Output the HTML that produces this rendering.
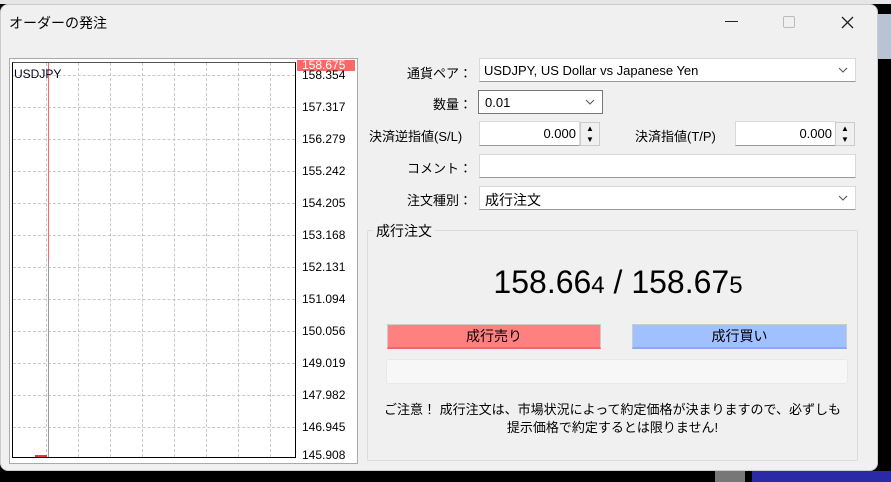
<!DOCTYPE html>
<html><head><meta charset="utf-8"><style>
*{margin:0;padding:0;box-sizing:border-box}
body{width:891px;height:482px;overflow:hidden;background:#000;font-family:"Liberation Sans","Noto Sans CJK JP",sans-serif;font-size:13px;color:#000;position:relative}
.a{position:absolute}
.win{left:0;top:4px;width:878px;height:467px;background:#f0f0f0;border-radius:8px;border:1px solid #ccc}
.lbl{text-align:right;width:120px;left:352px;font-size:13px}
.box{background:#fff;border:1px solid #d9d9d9;border-bottom:1px solid #999}
.chev{position:absolute;right:7px;top:8px;width:10px;height:6px}
.gl{position:absolute;border-left:1px dashed #c8c8c8;top:0;bottom:0}
.gh{position:absolute;border-top:1px dashed #c8c8c8;left:0;right:0}
.pl{position:absolute;left:302px;font-size:12px}
.spin{position:absolute;width:20px;height:24px;background:#f0f0f0;border:1px solid #ccc;font-size:8px;text-align:center;line-height:11px}
</style></head><body>
<div class="a" style="left:0;top:0;width:891px;height:4px;background:#e6e6e6"></div>
<div class="a" style="left:877px;top:14px;width:14px;height:45px;background:#b8c4d4"></div>
<div class="a win"></div>
<div class="a" style="left:9px;top:13px;font-size:14px">オーダーの発注</div>
<div class="a" style="left:725px;top:21px;width:13px;border-top:1px solid #222"></div>
<div class="a" style="left:783px;top:16px;width:12px;height:12px;border:1px solid #bbb;border-radius:2px"></div>
<svg class="a" style="left:841px;top:16px" width="13" height="13"><path d="M1 1L12 12M12 1L1 12" stroke="#222" stroke-width="1.3"/></svg>

<div class="a" style="left:9px;top:58px;width:349px;height:406px;background:#fff;border:1px solid #aaa"></div>
<div class="a" style="left:12px;top:62px;width:284px;height:396px;border:1px solid #000;border-top-color:#555;overflow:hidden;background:#fff">
<div class="gl" style="left:33px"></div><div class="gl" style="left:65px"></div><div class="gl" style="left:97px"></div><div class="gl" style="left:129px"></div><div class="gl" style="left:161px"></div><div class="gl" style="left:193px"></div><div class="gl" style="left:225px"></div><div class="gl" style="left:257px"></div>
<div class="gh" style="top:12px"></div><div class="gh" style="top:44px"></div><div class="gh" style="top:76px"></div><div class="gh" style="top:108px"></div><div class="gh" style="top:140px"></div><div class="gh" style="top:172px"></div><div class="gh" style="top:204px"></div><div class="gh" style="top:236px"></div><div class="gh" style="top:268px"></div><div class="gh" style="top:300px"></div><div class="gh" style="top:332px"></div><div class="gh" style="top:364px"></div>
<div class="a" style="left:35px;top:0;width:1px;height:198px;background:#f66"></div>
<div class="a" style="left:35px;top:198px;width:1px;height:200px;background:#999"></div>
<div class="a" style="left:0;top:-1px;width:284px;height:1px;background:#f66"></div>
<div class="a" style="left:1px;top:4px;font-size:12px;color:#002">USDJPY</div>
<div class="a" style="left:22px;bottom:0;width:12px;height:2px;background:#e33"></div>
</div>
<div class="a" style="left:297px;top:60px;width:58px;height:11px;background:#f66;color:#fff;font-size:12px;line-height:11px;padding-left:5px">158.675</div>
<div class="pl" style="top:68px">158.354</div><div class="pl" style="top:100px">157.317</div><div class="pl" style="top:132px">156.279</div><div class="pl" style="top:164px">155.242</div><div class="pl" style="top:196px">154.205</div><div class="pl" style="top:228px">153.168</div><div class="pl" style="top:260px">152.131</div><div class="pl" style="top:292px">151.094</div><div class="pl" style="top:324px">150.056</div><div class="pl" style="top:356px">149.019</div><div class="pl" style="top:388px">147.982</div><div class="pl" style="top:420px">146.945</div><div class="pl" style="top:448px">145.908</div>

<div class="a lbl" style="top:63px">通貨ペア：</div>
<div class="a box" style="left:479px;top:58px;width:377px;height:24px;padding:4px 4px">USDJPY, US Dollar vs Japanese Yen<svg class="chev" viewBox="0 0 10 6"><path d="M1 1L5 5L9 1" fill="none" stroke="#555"/></svg></div>
<div class="a lbl" style="top:94px">数量：</div>
<div class="a box" style="left:478px;top:90px;width:125px;height:24px;padding:4px 6px;border:1px solid #777">0.01<svg class="chev" viewBox="0 0 10 6"><path d="M1 1L5 5L9 1" fill="none" stroke="#555"/></svg></div>
<div class="a" style="left:369px;top:126px">決済逆指値(S/L)</div>
<div class="a box" style="left:479px;top:121px;width:101px;height:25px;text-align:right;padding:4px 3px">0.000</div>
<div class="spin" style="left:580px;top:122px">▲<br>▼</div>
<div class="a" style="left:635px;top:126px">決済指値(T/P)</div>
<div class="a box" style="left:735px;top:121px;width:101px;height:25px;text-align:right;padding:4px 3px">0.000</div>
<div class="spin" style="left:835px;top:122px">▲<br>▼</div>
<div class="a lbl" style="top:158px">コメント：</div>
<div class="a box" style="left:479px;top:154px;width:377px;height:24px"></div>
<div class="a lbl" style="top:190px">注文種別：</div>
<div class="a box" style="left:479px;top:186px;width:377px;height:24px;padding:3px 5px;font-size:14px">成行注文<svg class="chev" viewBox="0 0 10 6"><path d="M1 1L5 5L9 1" fill="none" stroke="#555"/></svg></div>

<div class="a" style="left:367px;top:230px;width:491px;height:231px;border:1px solid #dcdcdc;border-radius:2px"></div>
<div class="a" style="left:373px;top:221px;background:#f0f0f0;padding:0 3px;font-size:14px">成行注文</div>
<div class="a" style="left:360px;top:264px;width:516px;text-align:center;font-size:32px">158.66<span style="font-size:24px">4</span> / 158.67<span style="font-size:24px">5</span></div>
<div class="a" style="left:387px;top:324px;width:214px;height:25px;background:#ff8080;border:1px solid #ccc;border-bottom:2px solid #e66;text-align:center;line-height:22px;font-size:14px">成行売り</div>
<div class="a" style="left:632px;top:324px;width:215px;height:25px;background:#a0c0ff;border:1px solid #ccc;border-bottom:2px solid #8aaaee;text-align:center;line-height:22px;font-size:14px">成行買い</div>
<div class="a" style="left:386px;top:359px;width:462px;height:25px;background:#f7f7f7;border:1px solid #e8e8e8;border-radius:3px"></div>
<div class="a" style="left:367px;top:401px;width:491px;text-align:center;font-size:13px;line-height:18px">ご注意！ 成行注文は、市場状況によって約定価格が決まりますので、必ずしも<br>提示価格で約定するとは限りません!</div>
<div class="a" style="left:715px;top:471px;width:30px;height:11px;background:#777"></div>
<div class="a" style="left:752px;top:471px;width:220px;height:11px;background:#2a2aa8"></div>
</body></html>
